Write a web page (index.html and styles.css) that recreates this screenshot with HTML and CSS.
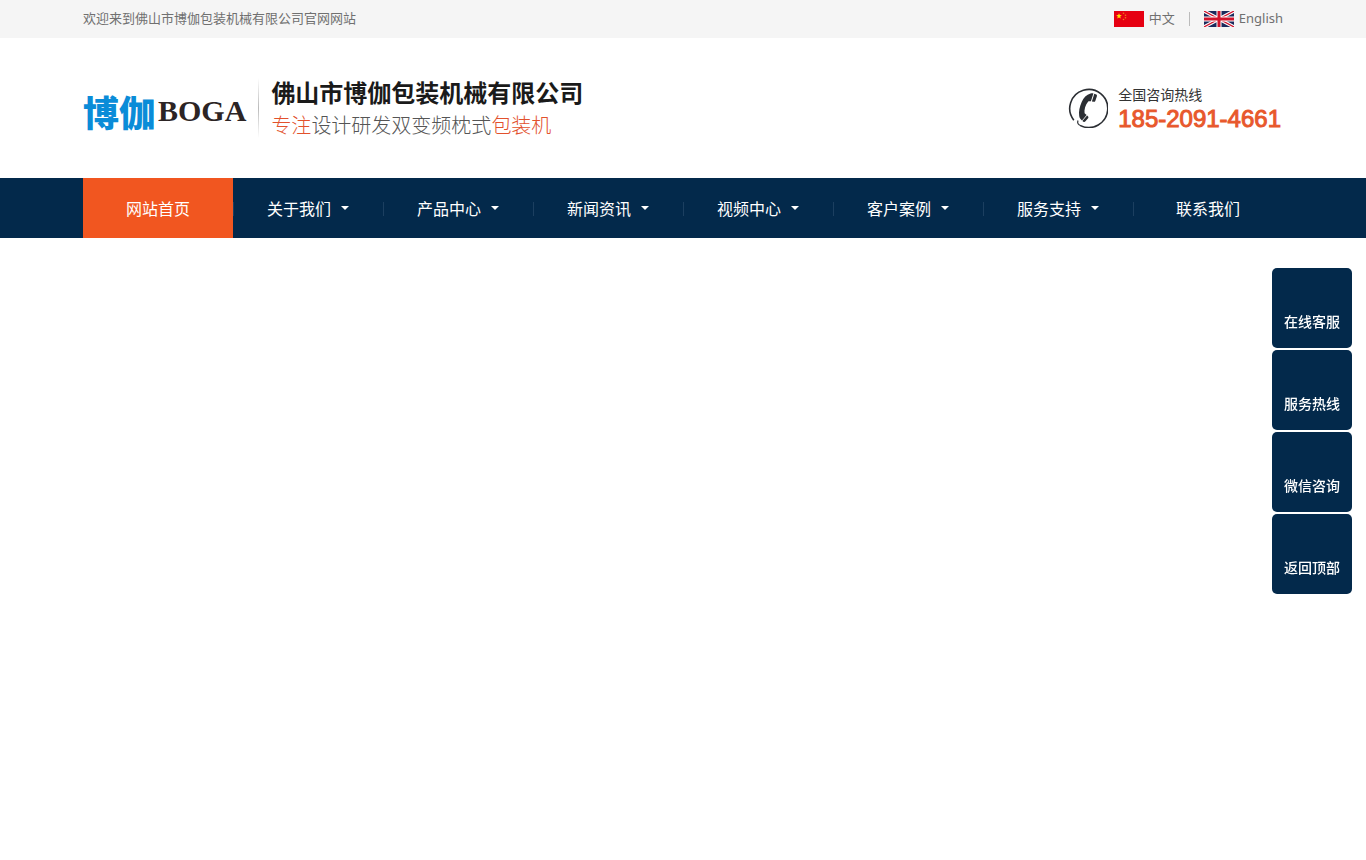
FILE: index.html
```html
<!DOCTYPE html>
<html lang="zh-CN">
<head>
<meta charset="utf-8">
<meta name="viewport" content="width=device-width, initial-scale=1">
<title>佛山市博伽包装机械有限公司</title>
<link rel="stylesheet" href="styles.css">
</head>
<body>
<div class="topbar">
  <div class="container topbar-row">
    <p class="topbar-text">欢迎来到佛山市博伽包装机械有限公司官网网站</p>
    <div class="langs">
      <a class="lang" href="#">
        <svg class="flag" viewBox="0 0 30 16" aria-hidden="true">
          <rect width="30" height="16" fill="#e60012"/>
          <path d="M5 2.200l.8 1.900 2 .1-1.600 1.300.6 2L5 6.400 3.200 7.500l.6-2L2.200 4.200l2-.1z" fill="#ffde00"/>
          <g fill="#f07a18"><circle cx="9.500" cy="2.300" r=".8"/><circle cx="11.500" cy="4.200" r=".8"/><circle cx="11.500" cy="6.700" r=".8"/><circle cx="9.500" cy="8.500" r=".8"/></g>
        </svg>
        <span class="topbar-text">中文</span>
      </a>
      <span class="lang-sep"></span>
      <a class="lang" href="#">
        <svg class="flag" viewBox="0 0 30 16" aria-hidden="true">
          <rect width="30" height="16" fill="#1b2a5c"/>
          <path d="M0 0l30 16M30 0L0 16" stroke="#fff" stroke-width="3.400"/>
          <path d="M0 0l30 16M30 0L0 16" stroke="#d0142c" stroke-width="1.200"/>
          <path d="M15 0v16M0 8h30" stroke="#fff" stroke-width="5"/>
          <path d="M15 0v16M0 8h30" stroke="#d0142c" stroke-width="3"/>
        </svg>
        <span class="topbar-text">English</span>
      </a>
    </div>
  </div>
</div>
<header class="container header">
  <a class="logo" href="#"><span class="logo-cn">博伽</span><span class="logo-en">BOGA</span></a>
  <span class="header-rule"></span>
  <div class="slogan">
    <h1 class="company">佛山市博伽包装机械有限公司</h1>
    <p class="tagline"><em>专注</em>设计研发双变频枕式<em>包装机</em></p>
  </div>
  <div class="hotline">
    <svg class="phone" viewBox="0 0 40 40" aria-hidden="true">
      <path d="M5.800 32.200A19 19 0 1 1 12.500 37.600" fill="none" stroke="#2b2e33" stroke-width="1.600"/>
      <path d="M10 32.500c-1 2.500.2 4.300 3 5.300" fill="none" stroke="#2b2e33" stroke-width="1.200"/>
      <path d="M22.500 5.600c-4 1-7 4.200-8.800 8.400-2 4.700-3.200 9.500-2.500 14 .3 2 1.300 3.400 2.800 4.400l4.600-5.400-2-1.700c-.6-3.600.8-8.300 3.600-11.800.5-.5 1.500-.3 2.700-.3l2.500-7.800c-1-.1-2 0-2.900.2z" fill="#2b2e33"/>
      <path d="M26.300 5.800l2 .8c.7.400.8 1.200.5 2l-1.500 4.300c-.3.700-.8.900-1.400.8l-2-.2zM19.100 27.600l1 1c.5.500.4 1.100 0 1.700l-2.900 3.300c-.5.500-1.200.5-1.800.1l-1-.7z" fill="#2b2e33"/>
    </svg>
    <div>
      <p class="hotline-label">全国咨询热线</p>
      <p class="hotline-number">185-2091-4661</p>
    </div>
  </div>
</header>
<nav class="nav">
  <ul class="container nav-list">
    <li class="nav-item active"><a href="#">网站首页</a></li>
    <li class="nav-item"><a href="#">关于我们<i class="caret"></i></a></li>
    <li class="nav-item"><a href="#">产品中心<i class="caret"></i></a></li>
    <li class="nav-item"><a href="#">新闻资讯<i class="caret"></i></a></li>
    <li class="nav-item"><a href="#">视频中心<i class="caret"></i></a></li>
    <li class="nav-item"><a href="#">客户案例<i class="caret"></i></a></li>
    <li class="nav-item"><a href="#">服务支持<i class="caret"></i></a></li>
    <li class="nav-item"><a href="#">联系我们</a></li>
  </ul>
</nav>
<aside class="side">
  <button class="side-btn" type="button">在线客服</button>
  <button class="side-btn" type="button">服务热线</button>
  <button class="side-btn" type="button">微信咨询</button>
  <button class="side-btn" type="button">返回顶部</button>
</aside>
</body>
</html>
```
FILE: styles.css
```css
* { box-sizing: border-box; }
body, h1, p, ul { margin: 0; padding: 0; }
body {
  font-family: "Noto Sans", "Noto Sans CJK SC", sans-serif;
  font-size: 13px;
  color: #707070;
  background: #fff;
}
a { color: inherit; text-decoration: none; }
.container { max-width: 1200px; margin: 0 auto; }

.topbar { background: #f5f5f5; }
.topbar-row { display: flex; justify-content: space-between; }
.topbar-text { line-height: 36px; padding-bottom: 2px; }
.langs { display: flex; align-items: center; gap: 14px; }
.lang { display: flex; align-items: center; gap: 5px; }
.flag { width: 30px; height: 16px; }
.lang-sep { width: 1px; height: 14px; background: #bbb; }

.header { display: flex; align-items: center; height: 140px; }
.logo { display: flex; align-items: center; gap: 3px; padding-top: 6px; line-height: 40px; }
.logo-cn {
  font-family: "Noto Sans CJK SC", sans-serif;
  font-size: 36px;
  font-weight: 900;
  color: #0a8cd8;
}
.logo-en {
  font-family: "Liberation Serif", serif;
  font-size: 30px;
  font-weight: 700;
  color: #2c2424;
}
.header-rule {
  width: 1px;
  height: 60px;
  margin: 0 12px;
  background: linear-gradient(#fff, #bbb, #fff);
}
.slogan { display: grid; gap: 2px; }
.company {
  font-family: "Noto Sans CJK SC", sans-serif;
  font-size: 24px;
  line-height: 32px;
  font-weight: 700;
  color: #1a1a1a;
}
.tagline {
  font-family: "Noto Sans CJK SC", sans-serif;
  font-size: 20px;
  line-height: 30px;
  font-weight: 300;
  color: #555;
}
.tagline em { font-style: normal; color: #e2512c; }
.hotline { display: flex; align-items: center; gap: 10px; margin-left: auto; padding-right: 2px; }
.phone { width: 40px; height: 40px; }
.hotline-label { font-size: 14px; line-height: 22px; color: #333; }
.hotline-number {
  font-family: "Liberation Sans", sans-serif;
  font-size: 24px;
  line-height: 26px;
  color: #e8582c;
  -webkit-text-stroke: 1px #e8582c;
}

.nav { background: #03294b; }
.nav-list { display: flex; list-style: none; }
.nav-item { flex: 1; position: relative; }
.nav-item a {
  display: flex;
  align-items: center;
  justify-content: center;
  gap: 10px;
  height: 60px;
  padding-bottom: 1px;
  font-size: 16px;
  color: #fff;
}
.nav-item + .nav-item::before {
  content: "";
  position: absolute;
  left: 0;
  top: 24px;
  width: 1px;
  height: 14px;
  background: #1c3f60;
}
.active { background: #f15620; }
.caret {
  border: 4px solid transparent;
  border-top-color: #fff;
  border-bottom: 0;
}

.side {
  position: fixed;
  right: 14px;
  top: 268px;
  display: grid;
  gap: 2px;
}
.side-btn {
  width: 80px;
  height: 80px;
  padding: 43px 0 17px;
  border: 0;
  border-radius: 5px;
  background: #03294b;
  color: #fff;
  font: 500 14px/20px "Noto Sans CJK SC", sans-serif;
}
```
